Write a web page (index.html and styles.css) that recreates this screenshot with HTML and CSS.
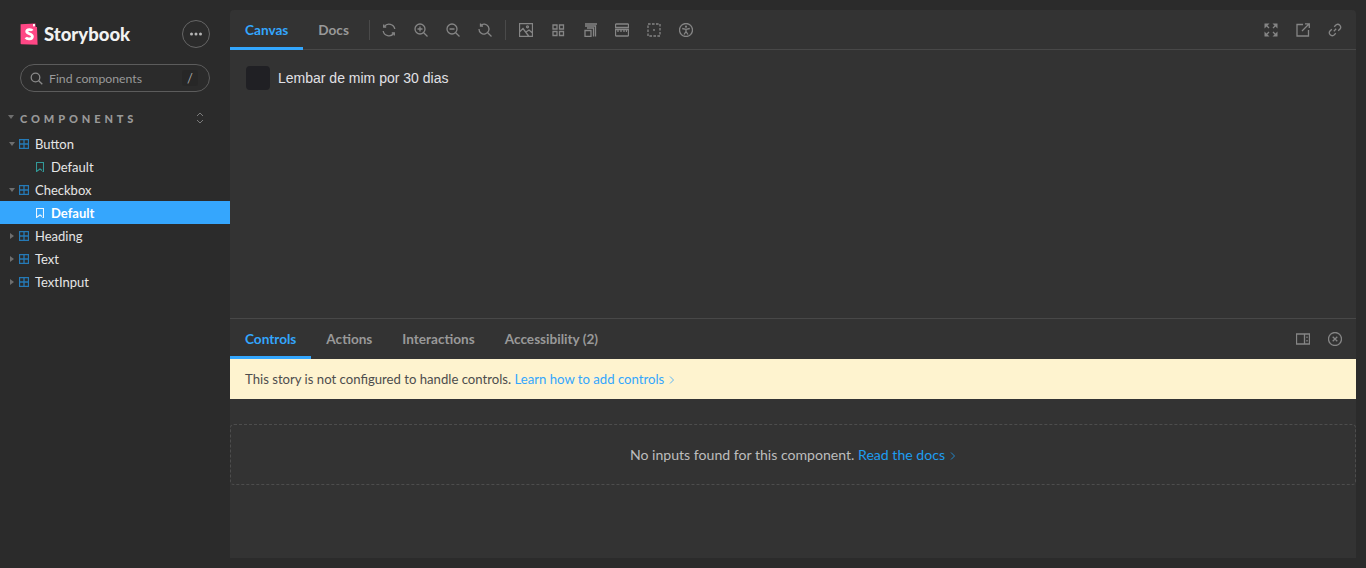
FILE: index.html
```html
<!DOCTYPE html>
<html lang="en">
<head>
<meta charset="utf-8">
<title>Storybook</title>
<link rel="stylesheet" href="styles.css">
</head>
<body>
<aside class="sidebar">
  <div class="brand">
    <div class="logo">
      <svg width="18" height="22" viewBox="0 0 18 22"><path fill="#ff4785" d="M0.6 1.200 15 .4l.3-.1.4 3.700 1.300-.1.6 17.800L1.400 21.300.6 20.700z"/><path fill="#fff" d="M13 1l1.900-.1.1 2.700-1-.7-1 .8z"/><path fill="none" stroke="#fff" stroke-width="2.800" d="M12.300 7.600c-.6-1.200-5.600-1.600-5.600 1 0 2.500 5.700 1.900 5.700 4.900 0 3-5.400 3-6.600 1"/></svg>
      <span class="logo-text">Storybook</span>
    </div>
    <button class="menu-btn" aria-label="Menu"><svg width="14" height="14" viewBox="0 0 14 14"><circle cx="2.500" cy="7" r="1.500"/><circle cx="7" cy="7" r="1.500"/><circle cx="11.500" cy="7" r="1.500"/></svg></button>
  </div>
  <div class="search">
    <svg class="search-icon" width="13" height="13" viewBox="0 0 13 13"><circle cx="5.500" cy="5.500" r="4.300"/><path d="M8.700 8.700l3.600 3.600"/></svg>
    <span class="search-text">Find components</span>
    <kbd class="search-key">/</kbd>
  </div>
  <div class="section-head">
    <svg class="caret" width="6" height="4" viewBox="0 0 6 4"><path d="M0 0h6L3 4z"/></svg>
    <span class="section-title">COMPONENTS</span>
    <svg class="expand" width="8" height="12" viewBox="0 0 8 12"><path d="M1 4l3-3 3 3M1 8l3 3 3-3"/></svg>
  </div>
  <ul class="tree">
    <li class="row">
      <svg class="caret" width="6" height="4" viewBox="0 0 6 4"><path d="M0 0h6L3 4z"/></svg>
      <svg class="grid" width="10" height="10" viewBox="0 0 10 10"><path d="M.5.500h9v9h-9zM5 .5v9M.5 5h9"/></svg>
      <span>Button</span>
    </li>
    <li class="row story">
      <svg class="mark" width="8" height="10" viewBox="0 0 8 10"><path d="M.5.500h7v9L4 7 .5 9.500z"/></svg>
      <span>Default</span>
    </li>
    <li class="row">
      <svg class="caret" width="6" height="4" viewBox="0 0 6 4"><path d="M0 0h6L3 4z"/></svg>
      <svg class="grid" width="10" height="10" viewBox="0 0 10 10"><path d="M.5.500h9v9h-9zM5 .5v9M.5 5h9"/></svg>
      <span>Checkbox</span>
    </li>
    <li class="row story selected">
      <svg class="mark" width="8" height="10" viewBox="0 0 8 10"><path d="M.5.500h7v9L4 7 .5 9.500z"/></svg>
      <span>Default</span>
    </li>
    <li class="row">
      <svg class="caret side" width="4" height="6" viewBox="0 0 4 6"><path d="M0 0l4 3-4 3z"/></svg>
      <svg class="grid" width="10" height="10" viewBox="0 0 10 10"><path d="M.5.500h9v9h-9zM5 .5v9M.5 5h9"/></svg>
      <span>Heading</span>
    </li>
    <li class="row">
      <svg class="caret side" width="4" height="6" viewBox="0 0 4 6"><path d="M0 0l4 3-4 3z"/></svg>
      <svg class="grid" width="10" height="10" viewBox="0 0 10 10"><path d="M.5.500h9v9h-9zM5 .5v9M.5 5h9"/></svg>
      <span>Text</span>
    </li>
    <li class="row">
      <svg class="caret side" width="4" height="6" viewBox="0 0 4 6"><path d="M0 0l4 3-4 3z"/></svg>
      <svg class="grid" width="10" height="10" viewBox="0 0 10 10"><path d="M.5.500h9v9h-9zM5 .5v9M.5 5h9"/></svg>
      <span>TextInput</span>
    </li>
  </ul>
</aside>
<main class="main">
  <header class="toolbar">
    <nav class="tabs">
      <a class="tab active">Canvas</a>
      <a class="tab">Docs</a>
    </nav>
    <span class="divider"></span>
    <div class="tools">
      <svg class="icon" viewBox="0 0 14 14"><path d="M12.800 6A5.900 5.900 0 0 0 2.300 3.500M1.200 8a5.900 5.900 0 0 0 10.500 2.500"/><path d="M1.700 1.500v2.500h2.500M12.300 12.500V10H9.800"/></svg>
      <svg class="icon" viewBox="0 0 14 14"><circle cx="6" cy="6" r="5"/><path d="M9.700 9.700l3.800 3.800M6 3.500v5M3.500 6h5"/></svg>
      <svg class="icon" viewBox="0 0 14 14"><circle cx="6" cy="6" r="5"/><path d="M9.700 9.700l3.800 3.800M3.500 6h5"/></svg>
      <svg class="icon" viewBox="0 0 14 14"><path d="M1 6a5 5 0 1 0 1.500-3.500"/><path d="M2.500 .500v2.500H5M9.700 9.700l3.800 3.800"/></svg>
    </div>
    <span class="divider wide"></span>
    <div class="tools">
      <svg class="icon" viewBox="0 0 14 14"><path d="M.5.500h13v13H.5zM.5 9l3.500-3.500 6 8M7 9l3-2 3.500 3"/><circle cx="8.500" cy="3.800" r="1"/></svg>
      <svg class="icon" viewBox="0 0 14 14"><path d="M2 2h4v4H2zM8.500 2h4v4h-4zM2 8.500h4v4H2zM8.500 8.500h4v4h-4z"/></svg>
      <svg class="icon" viewBox="0 0 14 14"><path d="M2 7.500h6v6H2zM4 5h6.500v8.500M2 3h10.500v10.500M2 1h12.500" /></svg>
      <svg class="icon" viewBox="0 0 14 14"><path d="M.5 1h13M.5 13h13M.5 1v3.500h13V1M.5 13V6.500h13V13M3 6.500v2.500M6 6.500v2.500M9 6.500v2.500M11.500 6.500v2.500"/></svg>
      <svg class="icon" viewBox="0 0 14 14"><path stroke-dasharray="2.600 1.400" d="M1 1h12v12H1z"/><circle class="dot" cx="7" cy="7" r=".9"/></svg>
      <svg class="icon" viewBox="0 0 14 14"><circle cx="7" cy="7" r="6.500"/><circle class="dot" cx="7" cy="3.700" r="1.100"/><path d="M3.200 5.500L7 6.300l3.800-.8M7 6.300v2.200L5 11.500M7 8.500l2 3"/></svg>
    </div>
    <div class="tools end">
      <svg class="icon" viewBox="0 0 14 14"><path d="M1.500 1.500l3.500 3.500M12.500 1.500L9 5M1.500 12.500L5 9M12.500 12.500L9 9"/><path class="fill" d="M.5.500h5L.5 5.500zM13.500.5v5l-5-5zM.5 13.500v-5l5 5zM13.500 13.500h-5l5-5z"/></svg>
      <svg class="icon" viewBox="0 0 14 14"><path d="M7 1.500H1v11.500h11.500V7M6 8l7-7M9 .8h4.300V5"/></svg>
      <svg class="icon" viewBox="0 0 14 14"><path d="M5.800 8.200l2.400-2.400M6.200 3.800l2-2a2.900 2.900 0 0 1 4 4l-2 2M7.800 10.200l-2 2a2.900 2.900 0 0 1-4-4l2-2"/></svg>
    </div>
  </header>
  <section class="canvas">
    <div class="checkbox-row">
      <span class="box"></span>
      <span class="box-label">Lembar de mim por 30 dias</span>
    </div>
  </section>
  <section class="addons">
    <header class="addon-bar">
      <nav class="tabs">
        <a class="tab addon active">Controls</a>
        <a class="tab addon">Actions</a>
        <a class="tab addon">Interactions</a>
        <a class="tab addon">Accessibility (2)</a>
      </nav>
      <div class="tools end">
        <svg class="icon" viewBox="0 0 14 14"><path d="M.5 2h13v10H.5zM8.500 2v10"/><path class="notch" d="M11 4.500v1.500M11 8v1.500"/></svg>
        <svg class="icon" viewBox="0 0 14 14"><circle cx="7" cy="7" r="6.500"/><path d="M4.700 4.700l4.600 4.600M9.300 4.700l-4.600 4.600"/></svg>
      </div>
    </header>
    <div class="notice">This story is not configured to handle controls. <a class="link">Learn how to add controls<svg class="chev" width="6" height="8" viewBox="0 0 6 8"><path d="M1 .5L4.500 4 1 7.500"/></svg></a></div>
    <div class="empty">
      <span>No inputs found for this component. <a class="link dim">Read the docs<svg class="chev" width="6" height="8" viewBox="0 0 6 8"><path d="M1 .5L4.500 4 1 7.500"/></svg></a></span>
    </div>
  </section>
</main>
</body>
</html>
```
FILE: styles.css
```css
* { box-sizing: border-box; }
html, body { height: 100%; }
body {
  margin: 0;
  background: #2b2b2b;
  color: #fff;
  display: flex;
  overflow: hidden;
  font-family: "Lato", "Noto Sans", sans-serif;
  font-size: 13px;
}
.sidebar { width: 230px; flex: none; padding: 20px 20px 0; }
.brand { display: flex; align-items: center; justify-content: space-between; height: 28px; }
.logo { display: flex; align-items: center; gap: 6px; margin-top: -1px; }
.logo-text { font-weight: 900; font-size: 18.500px; color: #f2f2f2; }
.menu-btn {
  width: 28px; height: 28px; padding: 0; border-radius: 50%;
  background: transparent; border: 1px solid #666;
  display: flex; align-items: center; justify-content: center;
}
.menu-btn svg { fill: #b5b5b5; }
.search {
  margin-top: 16px; height: 28px; border: 1px solid #5c5c5c; border-radius: 14px;
  display: flex; align-items: center; padding: 0 11px 0 9px;
}
.search-icon { fill: none; stroke: #8a8a8a; stroke-width: 1.300; flex: none; }
.search-text { margin-left: 6px; flex: 1; font-size: 12.250px; color: #9a9a9a; white-space: nowrap; }
.search-key {
  width: 16px; height: 16px; font: 13px/16px "Lato", sans-serif; text-align: center;
  color: #a5a5a5; background: rgba(0, 0, 0, .08); border-radius: 2px;
}
.section-head { position: relative; margin: 18px -12px 0 0; height: 16px; display: flex; align-items: center; }
.section-head .caret { position: absolute; left: -12px; top: 5px; }
.caret { fill: #6e6e6e; flex: none; }
.section-title { font-weight: 900; font-size: 11px; letter-spacing: 3.900px; color: #999; flex: 1; }
.expand { fill: none; stroke: #7a7a7a; stroke-width: 1; margin-right: 18px; }
.tree { list-style: none; margin: 6px -20px 0; padding: 0; }
.row {
  height: 23px; display: flex; align-items: center; padding-left: 9px;
  color: #e6e6e6; font-size: 13px; white-space: nowrap;
}
.row .caret { width: 6px; margin-right: 4px; }
.row .caret.side { width: 4px; margin-left: 1px; margin-right: 5px; }
.grid { fill: none; stroke: #2588d0; stroke-width: 1.300; opacity: .85; margin-right: 6px; flex: none; }
.story { padding-left: 36px; }
.mark { fill: none; stroke: #37d5d3; stroke-width: 1.100; margin-right: 7px; flex: none; opacity: .65; }
.selected { background: #35a6fd; color: #fff; font-weight: 700; }
.selected .mark { stroke: #fff; opacity: .9; }
.main {
  flex: 1; margin: 10px 10px 10px 0; background: #333;
  border-radius: 4px 4px 0 0; display: flex; flex-direction: column; min-width: 0;
}
.toolbar, .addon-bar { height: 40px; flex: none; display: flex; align-items: stretch; }
.toolbar { box-shadow: inset 0 -1px 0 #484848; }
.addon-bar { height: 41px; box-shadow: inset 0 1px 0 #484848; padding-top: 1px; }
.tabs { display: flex; }
.tab {
  display: flex; align-items: center; padding: 3px 15px 0;
  font-weight: 700; font-size: 13.600px; color: #999;
  border-bottom: 3px solid transparent;
}
.tab.active { color: #33a6fd; border-bottom-color: #33a6fd; }
.divider { width: 1px; height: 20px; background: #4a4a4a; align-self: center; margin: 0 5px; flex: none; }
.divider.wide { margin: 0 6px; }
.tools { display: flex; align-items: center; gap: 18px; padding: 0 7px 0 7px; }
.tools.end { margin-left: auto; padding-right: 14px; gap: 18px; }
.icon { width: 14px; height: 14px; fill: none; stroke: #858585; stroke-width: 1.300; flex: none; }
.icon .dot, .icon .fill { fill: #858585; stroke: none; }
.canvas { flex: 1; padding: 16px; min-height: 0; }
.checkbox-row { display: flex; align-items: center; gap: 8px; }
.box { width: 24px; height: 24px; background: #202024; border-radius: 4px; flex: none; }
.box-label { font-family: "Liberation Sans", Arial, sans-serif; font-size: 14px; color: #e1e1e6; }
.addons { height: 240px; flex: none; }
.notice {
  height: 40px; background: #fef3cf; color: #4d4d4d; font-size: 13.150px;
  display: flex; align-items: center; padding-left: 15px; white-space: pre;
}
.link { color: #33a6fd; }
.link.dim { color: #1e9df0; }
.chev { fill: none; stroke: currentColor; stroke-width: 1; margin-left: 5px; opacity: .8; }
.empty {
  margin-top: 25px; height: 61px; border: 1px dashed #4d4d4d; border-radius: 4px;
  display: flex; align-items: center; justify-content: center; color: #bdbdbd; font-size: 14.100px;
}
```
